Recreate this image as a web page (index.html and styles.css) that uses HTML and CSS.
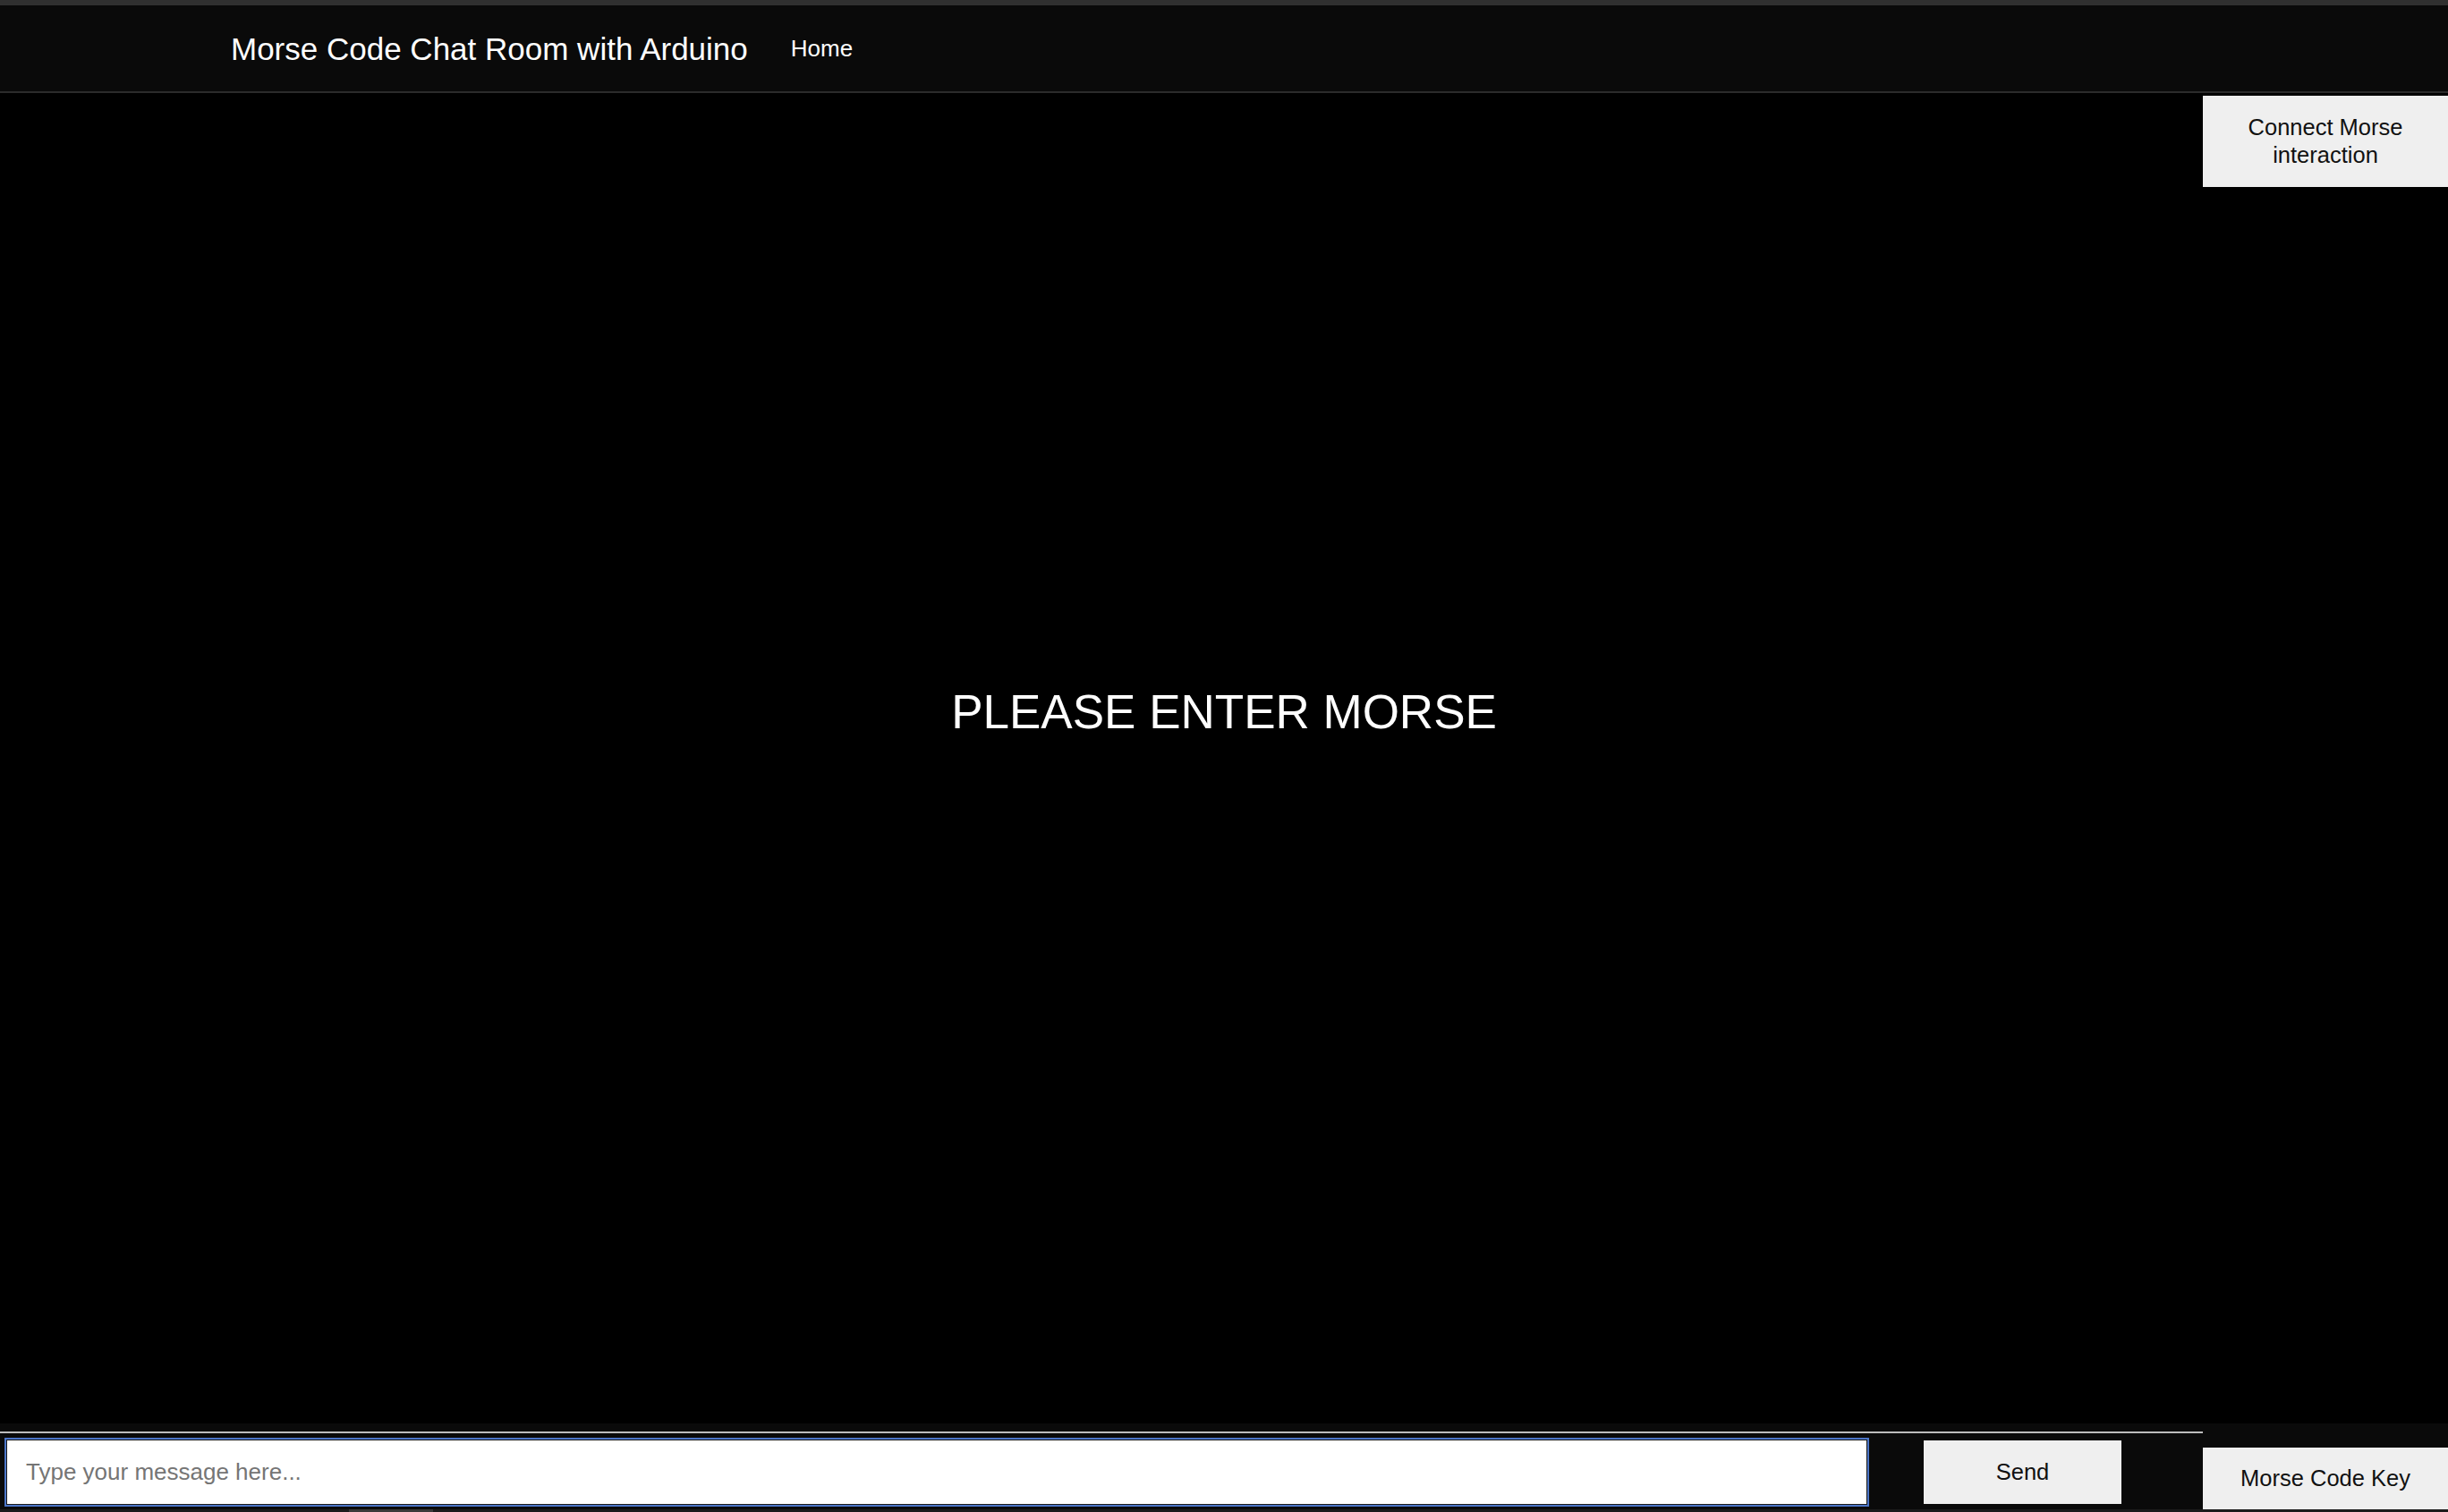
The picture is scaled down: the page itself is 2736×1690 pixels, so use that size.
FILE: index.html
```html
<!DOCTYPE html>
<html lang="en">
<head>
<meta charset="utf-8">
<title>Morse Code Chat Room with Arduino</title>
<link rel="stylesheet" href="styles.css">
</head>
<body>
<header class="nav">
  <span class="nav-title">Morse Code Chat Room with Arduino</span>
  <a class="nav-link" href="#">Home</a>
</header>
<main class="main">
  <section class="stage">
    <div class="prompt">PLEASE ENTER MORSE</div>
  </section>
  <aside class="side">
    <button class="btn btn-connect">Connect Morse<br>interaction</button>
  </aside>
</main>
<footer class="footer">
  <div class="chat">
    <form class="chat-form" onsubmit="return false">
      <input class="chat-input" type="text" placeholder="Type your message here..." autofocus>
      <button class="btn btn-send" type="button">Send</button>
    </form>
  </div>
  <div class="footer-side">
    <button class="btn btn-key">Morse Code Key</button>
  </div>
</footer>
<div class="strip"><span class="strip-thumb"></span></div>
</body>
</html>
```

FILE: styles.css
```css
html, body {
  margin: 0;
  padding: 0;
}
body {
  background: #000;
  font-family: "Liberation Sans", Arial, sans-serif;
  height: 1690px;
  overflow: hidden;
  color: #fff;
}
.nav {
  box-sizing: border-box;
  height: 104px;
  border-top: 6px solid #303030;
  border-bottom: 2px solid #2b2b2b;
  background: #0a0a0a;
  display: flex;
  align-items: center;
  padding-left: 258px;
}
.nav-title {
  font-size: 35px;
  color: #fff;
  line-height: 1;
}
.nav-link {
  margin-left: 48px;
  font-size: 26px;
  color: #fff;
  text-decoration: none;
  line-height: 1;
}
.main {
  display: flex;
  height: 1487px;
}
.stage {
  flex: 1;
  display: flex;
  justify-content: center;
  padding-left: 274px;
}
.prompt {
  margin-top: 665px;
  font-size: 53px;
  line-height: 53px;
  color: #fff;
  white-space: nowrap;
}
.side {
  width: 274px;
  flex: none;
}
.btn {
  border: none;
  background: #efefef;
  color: #111;
  font-family: "Liberation Sans", Arial, sans-serif;
  font-size: 25.5px;
  padding: 0;
  margin: 0;
  cursor: pointer;
}
.btn-connect {
  display: block;
  margin-top: 3px;
  width: 274px;
  height: 102px;
  line-height: 31px;
}
.footer {
  display: flex;
  height: 96px;
  background: #0a0a0a;
}
.chat {
  width: 2462px;
  flex: none;
  padding-top: 9px;
}
.chat-form {
  margin: 0;
  border-top: 2px solid #bcbcbc;
  display: flex;
  align-items: flex-start;
  padding-top: 5px;
}
.chat-input {
  box-sizing: border-box;
  margin-left: 5px;
  width: 2084px;
  height: 77px;
  border: 2px solid #4b75c7;
  box-shadow: inset 0 0 0 1px #1a1a1a;
  outline: none;
  background: #fff;
  padding: 0 0 0 22px;
  font-family: "Liberation Sans", Arial, sans-serif;
  font-size: 26px;
  color: #111;
}
.chat-input::placeholder {
  color: #757575;
}
.btn-send {
  margin-left: 61px;
  margin-top: 3px;
  width: 221px;
  height: 71px;
}
.footer-side {
  width: 274px;
  flex: none;
  padding-top: 27px;
}
.btn-key {
  display: block;
  width: 274px;
  height: 69px;
}
.strip {
  height: 3px;
  background: #1c1c1c;
  position: relative;
}
.strip-thumb {
  position: absolute;
  left: 390px;
  top: 0;
  width: 94px;
  height: 3px;
  background: #3a3a3a;
}
```
